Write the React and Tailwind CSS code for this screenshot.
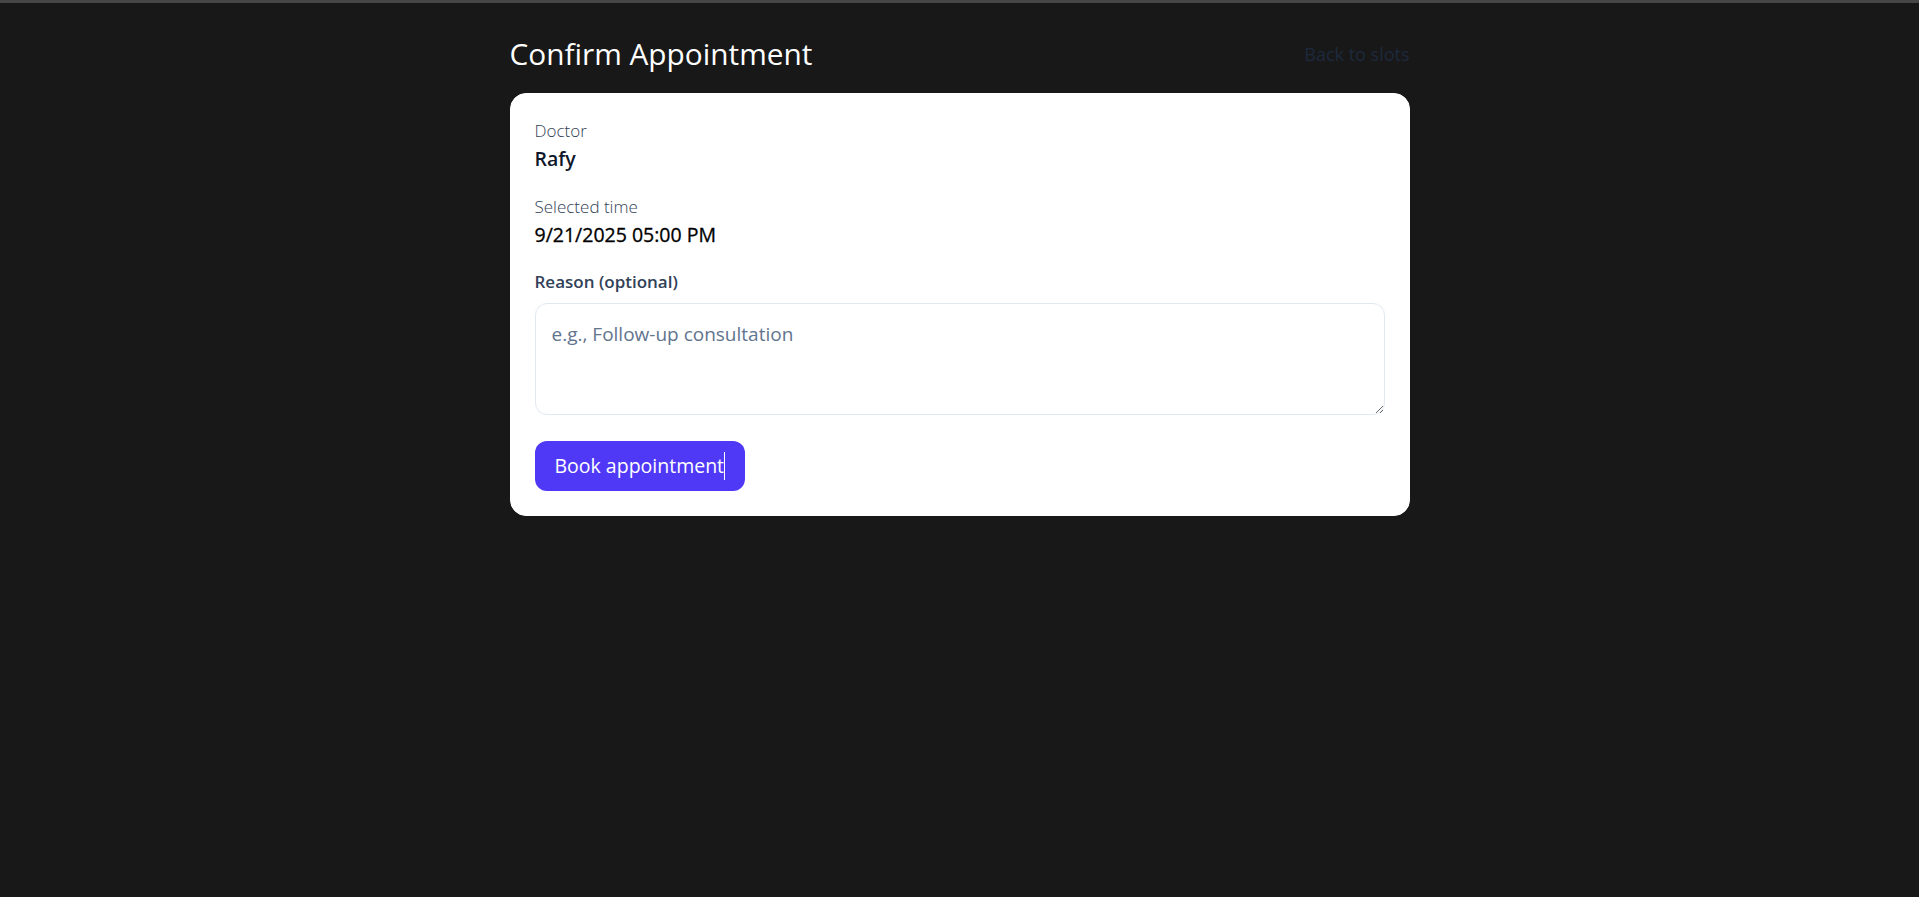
export default function App() {
  return (
    <div
      className="min-h-[897px] w-full bg-[#181818] border-t-[3px] border-[#464646]"
      style={{ fontFamily: '"Open Sans", "Noto Sans", sans-serif' }}
    >
      <div className="mx-auto w-[900px] pt-[33px]">
        <div className="flex items-center justify-between">
          <h1 className="text-[29.8px] leading-[36px] font-normal text-white">Confirm Appointment</h1>
          <a className="text-[18px] leading-[28px] text-[#1d293d]" href="#">Back to slots</a>
        </div>
        <div className="mt-[21px] rounded-2xl border border-white bg-white p-6">
          <div className="text-[17px] leading-[26px] font-light text-[#334155]">Doctor</div>
          <div className="text-[19.5px] leading-[30px] font-semibold text-[#0f172a]">Rafy</div>
          <div className="mt-[20px] text-[17px] leading-[26px] font-light text-[#334155]">Selected time</div>
          <div className="text-[19.5px] leading-[30px] font-normal text-black [-webkit-text-stroke:0.3px_black]">9/21/2025 05:00 PM</div>
          <label className="mt-[19px] block text-[17px] leading-[26px] font-semibold text-[#314158]">Reason (optional)</label>
          <textarea
            className="mt-2 block h-[112px] w-full rounded-xl border border-[#e2e8f0] px-4 py-4 text-[19px] leading-[28px] text-[#0f172a] placeholder:text-[#62748e] outline-none"
            placeholder="e.g., Follow-up consultation"
          />
          <button className="mt-[26px] flex h-[50px] items-center rounded-xl bg-[#4f39f6] px-5 text-[19.5px] text-white">
            Book appointment
            <span className="inline-block h-[28px] w-px bg-white" />
          </button>
        </div>
      </div>
    </div>
  );
}
